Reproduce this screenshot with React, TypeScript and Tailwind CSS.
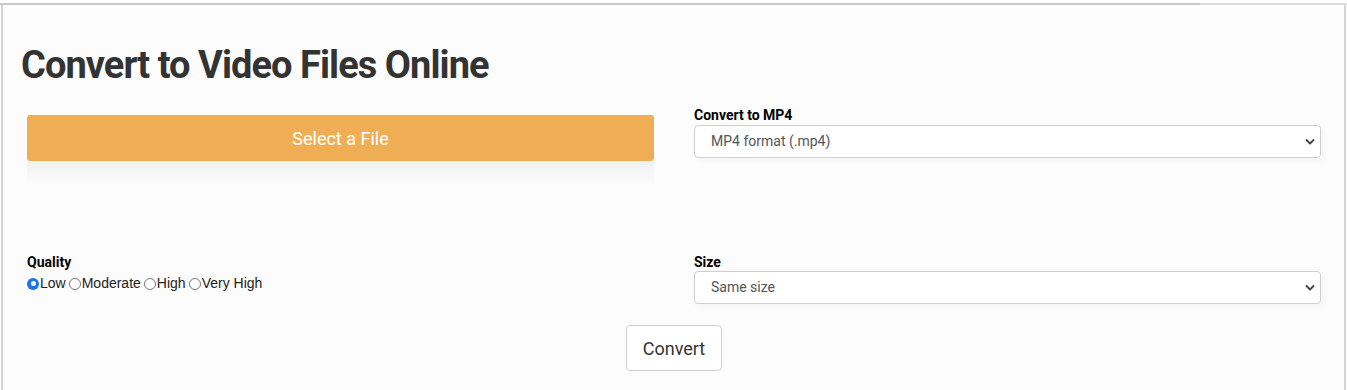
import React from "react";

function Chevron() {
  return (
    <svg width="10" height="7" viewBox="0 0 10 7" className="absolute right-[5px] top-1/2 -translate-y-1/2">
      <path d="M1.5 1.5 L5 5 L8.5 1.5" fill="none" stroke="#444" strokeWidth="1.8" strokeLinecap="round" strokeLinejoin="round" />
    </svg>
  );
}

function FakeSelect({ text, h }: { text: string; h: string }) {
  return (
    <div className={`relative w-[627px] ${h} bg-white border border-[#cfcfcf] rounded-[4px] flex items-center pl-[16px] text-[14px] text-[#555] shadow-[2px_2px_6px_rgba(0,0,0,0.04)]`}>
      <span>{text}</span>
      <Chevron />
    </div>
  );
}

function Radio({ checked, label }: { checked?: boolean; label: string }) {
  return (
    <span className="flex items-center">
      {checked ? (
        <span className="w-[12px] h-[12px] rounded-full bg-[#1a73e8] flex items-center justify-center mr-px">
          <span className="w-[5px] h-[5px] rounded-full bg-white" />
        </span>
      ) : (
        <span className="w-[12px] h-[12px] rounded-full border border-[#777] bg-white mr-px" />
      )}
      <span>{label}</span>
    </span>
  );
}

export default function App() {
  return (
    <div className="w-[1347px] h-[390px] bg-white overflow-hidden" style={{ fontFamily: "Roboto, 'Liberation Sans', sans-serif" }}>
      <div className="h-[3px]" />
      <div className="flex h-[2px]">
        <div className="w-[1200px] bg-[#c9c9c9]" />
        <div className="flex-1 bg-[#dcdcdc]" />
      </div>
      <div className="ml-px w-[1345px] h-[385px] border-l-2 border-r-2 border-[#d4d4d4] bg-[#fcfcfc]">
        <h1 className="pl-[18px] pt-[38px] text-[38px] leading-[44px] font-bold text-[#333] tracking-[-0.95px]">
          Convert to Video Files Online
        </h1>
        <div className="flex pl-[24px] pt-[28px]">
          <div className="w-[627px]">
            <div className="h-[46px] bg-[#f0ae54] rounded-[3px] flex items-center justify-center text-white text-[18px]">
              Select a File
            </div>
            <div className="h-[24px] bg-gradient-to-b from-[#f1f1f1] to-[#fcfcfc]" />
          </div>
          <div className="ml-[40px] -mt-[10px]">
            <div className="text-[14px] font-bold text-black leading-[20px]">Convert to MP4</div>
            <FakeSelect text="MP4 format (.mp4)" h="h-[33px]" />
          </div>
        </div>
        <div className="flex pl-[24px] pt-[68px]">
          <div className="w-[627px]">
            <div className="text-[14px] font-bold text-black leading-[18px]">Quality</div>
            <div className="flex items-center gap-[3px] mt-[2px] text-[14px] text-[#222]" style={{ fontFamily: "'Liberation Sans', Arial, sans-serif" }}>
              <Radio checked label="Low" />
              <Radio label="Moderate" />
              <Radio label="High" />
              <Radio label="Very High" />
            </div>
          </div>
          <div className="ml-[40px]">
            <div className="text-[14px] font-bold text-black leading-[18px]">Size</div>
            <FakeSelect text="Same size" h="h-[33px]" />
          </div>
        </div>
        <div className="flex justify-center pt-[21px] pl-[1px]">
          <div className="w-[96px] h-[46px] bg-white border border-[#cfcfcf] rounded-[4px] flex items-center justify-center text-[18px] text-[#333]">
            Convert
          </div>
        </div>
      </div>
    </div>
  );
}
